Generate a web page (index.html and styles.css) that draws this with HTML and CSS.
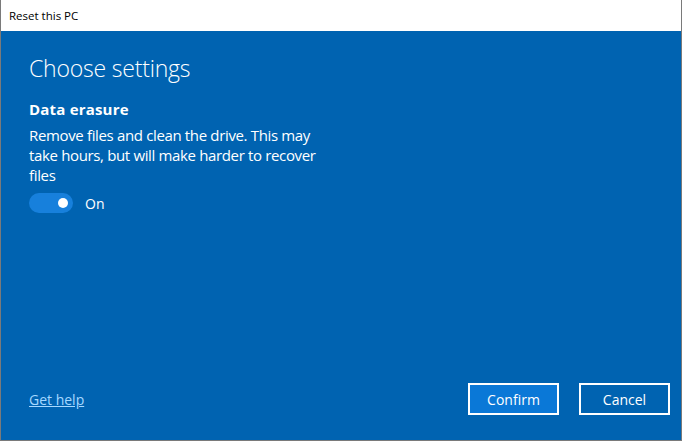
FILE: index.html
```html
<!DOCTYPE html>
<html lang="en">
<head>
<meta charset="utf-8">
<title>Reset this PC</title>
<link rel="stylesheet" href="styles.css">
</head>
<body>
<div class="window">
  <div class="titlebar">Reset this PC</div>
  <div class="content">
    <div class="main">
      <h1 class="heading">Choose settings</h1>
      <h2 class="label">Data erasure</h2>
      <p class="desc">Remove files and clean the drive. This may take hours, but will make harder to recover files</p>
      <div class="toggle-row">
        <span class="toggle"><span class="knob"></span></span>
        <span class="toggle-text">On</span>
      </div>
    </div>
    <div class="footer">
      <a class="help" href="#">Get help</a>
      <div class="buttons">
        <button class="btn btn-primary">Confirm</button>
        <button class="btn">Cancel</button>
      </div>
    </div>
  </div>
</div>
</body>
</html>
```

FILE: styles.css
```css
html, body {
  margin: 0;
  padding: 0;
  width: 682px;
  height: 441px;
  overflow: hidden;
  font-family: "Open Sans", "Noto Sans", "Liberation Sans", sans-serif;
}
.window {
  box-sizing: border-box;
  width: 682px;
  height: 441px;
  border: 1px solid #7a7a7a;
  border-top: none;
  display: flex;
  flex-direction: column;
  background: #0063b1;
}
.titlebar {
  height: 31px;
  background: #ffffff;
  color: #000;
  font-size: 11.5px;
  line-height: 31px;
  padding-left: 8px;
  flex: none;
}
.content {
  flex: 1;
  display: flex;
  flex-direction: column;
  justify-content: space-between;
  padding: 0 11px 0 28px;
  color: #fff;
}
.heading {
  margin: 20px 0 0;
  font-weight: 300;
  font-size: 23px;
  line-height: 34px;
  letter-spacing: -0.2px;
}
.label {
  margin: 14px 0 0;
  font-size: 15px;
  font-weight: 700;
  line-height: 20px;
  letter-spacing: 0.2px;
}
.desc {
  margin: 6px 0 0;
  width: 300px;
  font-size: 15px;
  line-height: 20px;
  letter-spacing: -0.35px;
}
.toggle-row {
  display: flex;
  align-items: center;
  margin-top: 8px;
}
.toggle {
  box-sizing: border-box;
  width: 44px;
  height: 20px;
  border-radius: 10px;
  background: #1780dc;
  display: flex;
  align-items: center;
  justify-content: flex-end;
  padding-right: 5px;
}
.knob {
  width: 10px;
  height: 10px;
  border-radius: 50%;
  background: #fff;
}
.toggle-text {
  margin-left: 12px;
  font-size: 14px;
}
.footer {
  display: flex;
  justify-content: space-between;
  align-items: center;
  height: 32px;
  margin-bottom: 25px;
}
.help {
  color: #a6d8ff;
  font-size: 14px;
  text-decoration: underline;
}
.buttons {
  display: flex;
  gap: 20px;
}
.btn {
  box-sizing: border-box;
  width: 91px;
  height: 32px;
  border: 2px solid #fff;
  background: #0063b1;
  color: #fff;
  font-family: inherit;
  font-size: 14px;
  padding: 0;
}
.btn-primary {
  background: #0a78d7;
}
```
